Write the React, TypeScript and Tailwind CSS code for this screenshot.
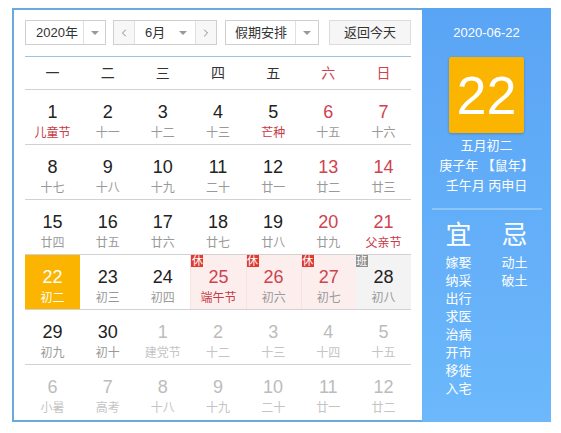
import { ChevronLeft, ChevronRight } from "lucide-react";

type Day = {
  n: number;
  l: string;
  fest?: boolean;
  out?: boolean;
  today?: boolean;
  rest?: boolean;
  work?: boolean;
};

const rows: Day[][] = [
  [
    { n: 1, l: "儿童节", fest: true },
    { n: 2, l: "十一" },
    { n: 3, l: "十二" },
    { n: 4, l: "十三" },
    { n: 5, l: "芒种", fest: true },
    { n: 6, l: "十五" },
    { n: 7, l: "十六" },
  ],
  [
    { n: 8, l: "十七" },
    { n: 9, l: "十八" },
    { n: 10, l: "十九" },
    { n: 11, l: "二十" },
    { n: 12, l: "廿一" },
    { n: 13, l: "廿二" },
    { n: 14, l: "廿三" },
  ],
  [
    { n: 15, l: "廿四" },
    { n: 16, l: "廿五" },
    { n: 17, l: "廿六" },
    { n: 18, l: "廿七" },
    { n: 19, l: "廿八" },
    { n: 20, l: "廿九" },
    { n: 21, l: "父亲节", fest: true },
  ],
  [
    { n: 22, l: "初二", today: true },
    { n: 23, l: "初三" },
    { n: 24, l: "初四" },
    { n: 25, l: "端午节", fest: true, rest: true },
    { n: 26, l: "初六", rest: true },
    { n: 27, l: "初七", rest: true },
    { n: 28, l: "初八", work: true },
  ],
  [
    { n: 29, l: "初九" },
    { n: 30, l: "初十" },
    { n: 1, l: "建党节", out: true },
    { n: 2, l: "十二", out: true },
    { n: 3, l: "十三", out: true },
    { n: 4, l: "十四", out: true },
    { n: 5, l: "十五", out: true },
  ],
  [
    { n: 6, l: "小暑", out: true },
    { n: 7, l: "高考", out: true },
    { n: 8, l: "十八", out: true },
    { n: 9, l: "十九", out: true },
    { n: 10, l: "二十", out: true },
    { n: 11, l: "廿一", out: true },
    { n: 12, l: "廿二", out: true },
  ],
];

const weekdays = ["一", "二", "三", "四", "五", "六", "日"];
const yi = ["嫁娶", "纳采", "出行", "求医", "治病", "开市", "移徙", "入宅"];
const ji = ["动土", "破土"];

function Caret() {
  return <span className="block w-0 h-0 border-x-[4px] border-x-transparent border-t-[4px] border-t-[#999]" />;
}

function DayCell({ d, col }: { d: Day; col: number }) {
  const weekend = col >= 5;
  let bg = "";
  let num = weekend ? "text-[#d0424e]" : "text-[#222]";
  let lunar = d.fest ? "text-[#c73a45]" : "text-[#999]";
  if (d.out) {
    num = "text-[#bcbcbc]";
    lunar = "text-[#c4c4c4]";
  }
  if (d.rest) {
    bg = "bg-[#fdeeee] border-l border-[#f9e2e2]";
    num = "text-[#d0424e]";
  }
  if (d.work) {
    // make-up workday shows as a normal weekday
    bg = "bg-[#f3f3f3]";
    num = "text-[#222]";
  }
  if (d.today) {
    bg = "bg-[#fbb500]";
    num = "text-white";
    lunar = "text-white";
  }
  return (
    <div className={`relative flex flex-col items-center pt-[11px] ${bg}`}>
      {d.rest && (
        <span className="absolute left-0 top-0 w-[12px] h-[12px] bg-[#dd3b33] text-white text-[11px] leading-[12px] text-center">休</span>
      )}
      {d.work && (
        <span className="absolute left-0 top-0 w-[12px] h-[12px] bg-[#8f8f8f] text-white text-[11px] leading-[12px] text-center">班</span>
      )}
      <span className={`text-[18px] leading-[22px] ${num}`}>{d.n}</span>
      <span className={`text-[12px] leading-[16px] mt-[2px] ${lunar}`}>{d.l}</span>
    </div>
  );
}

export default function App() {
  return (
    <div className="w-[561px] h-[433px] bg-white pt-[8px] pl-[12px] font-['Liberation_Sans','Noto_Sans_CJK_SC',sans-serif]">
      <div className="flex w-[539px]">
        {/* Calendar */}
        <div className="flex-1 border-2 border-r-0 border-[#69a9de] px-[11px] pt-[10px]">
          {/* Toolbar */}
          <div className="flex items-center h-[25px] text-[13px] text-[#333]">
            <div className="flex h-full w-[81px] border border-[#cfcfcf] bg-white">
              <span className="flex-1 flex items-center pl-[10px]">2020年</span>
              <span className="w-[22px] border-l border-[#e0e0e0] flex items-center justify-center"><Caret /></span>
            </div>
            <div className="flex h-full w-[104px] ml-[7px] border border-[#cfcfcf] bg-white">
              <span className="w-[21px] flex items-center justify-center bg-[#f7f7f7] border-r border-[#e0e0e0] text-[#666]">
                <ChevronLeft className="w-[12px] h-[12px]" strokeWidth={1.5} />
              </span>
              <span className="flex-1 flex items-center pl-[10px]">6月</span>
              <span className="w-[16px] flex items-center"><Caret /></span>
              <span className="w-[21px] flex items-center justify-center bg-[#f7f7f7] border-l border-[#e0e0e0] text-[#666]">
                <ChevronRight className="w-[12px] h-[12px]" strokeWidth={1.5} />
              </span>
            </div>
            <div className="flex h-full w-[94px] ml-[8px] border border-[#cfcfcf] bg-white">
              <span className="flex-1 flex items-center pl-[9px]">假期安排</span>
              <span className="w-[23px] border-l border-[#e0e0e0] flex items-center justify-center"><Caret /></span>
            </div>
            <div className="flex h-full w-[82px] ml-[10px] border border-[#dcdcdc] bg-[#f6f6f6] items-center justify-center">返回今天</div>
          </div>

          <div className="mt-[11px] h-px bg-[#9fc3e2]" />

          {/* Weekdays */}
          <div className="grid grid-cols-7 h-[33px] border-b border-[#d2d2d2] text-[14px]">
            {weekdays.map((w, i) => (
              <div key={w} className={`flex items-center justify-center ${i >= 5 ? "text-[#d0424e]" : "text-[#333]"}`}>{w}</div>
            ))}
          </div>

          {/* Days */}
          {rows.map((r, ri) => (
            <div key={ri} className={`grid grid-cols-7 h-[55px] ${ri < 5 ? "border-b border-[#d2d2d2]" : ""}`}>
              {r.map((d, ci) => (
                <DayCell key={ci} d={d} col={ci} />
              ))}
            </div>
          ))}
        </div>

        {/* Side panel */}
        <div className="w-[130px] bg-gradient-to-b from-[#5aa4f5] to-[#6cb8fb] flex flex-col items-center text-white">
          <div className="mt-[17px] text-[13px] leading-[16px]">2020-06-22</div>
          <div className="mt-[16px] w-[75px] h-[76px] bg-[#fbb500] rounded-[2px] shadow-[0_1px_3px_rgba(0,0,0,0.2)] flex items-center justify-center text-[54px] leading-none">22</div>
          <div className="mt-[3px] text-[13px] leading-[20px] text-center">
            <div>五月初二</div>
            <div>庚子年 【鼠年】</div>
            <div>壬午月 丙申日</div>
          </div>
          <div className="mt-[12px] w-[110px] h-[2px] bg-[#8cc5f8]" />
          <div className="mt-[10px] flex gap-[30px]">
            <div className="flex flex-col items-center w-[26px]">
              <span className="text-[26px] leading-[30px]">宜</span>
              <div className="mt-[4px] text-[13px] leading-[18px] flex flex-col items-center">
                {yi.map((t) => <span key={t}>{t}</span>)}
              </div>
            </div>
            <div className="flex flex-col items-center w-[26px]">
              <span className="text-[26px] leading-[30px]">忌</span>
              <div className="mt-[4px] text-[13px] leading-[18px] flex flex-col items-center">
                {ji.map((t) => <span key={t}>{t}</span>)}
              </div>
            </div>
          </div>
        </div>
      </div>
    </div>
  );
}
